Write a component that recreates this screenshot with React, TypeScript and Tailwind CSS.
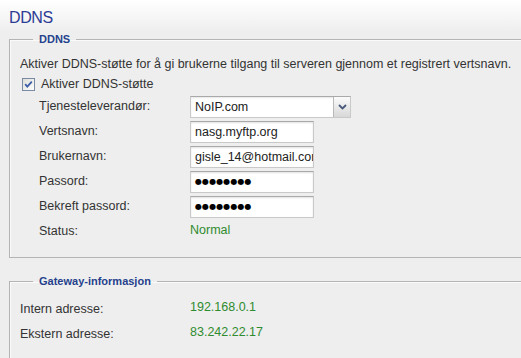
import React from "react";

const labelCls = "w-[151px] shrink-0";
const boxCls =
  "h-[22px] w-[124px] border border-[#c9c9c9] border-t-[#a9a9a9] bg-white shadow-[inset_0_1px_2px_rgba(0,0,0,0.12)] pl-[4px] leading-[20px] overflow-hidden whitespace-nowrap text-[#222]";
const dotsCls =
  "h-[22px] w-[124px] border border-[#c9c9c9] border-t-[#a9a9a9] bg-white shadow-[inset_0_1px_2px_rgba(0,0,0,0.12)] pl-[4px] leading-[20px] overflow-hidden whitespace-nowrap text-[8px] tracking-[0.1px] text-black font-['DejaVu_Sans']";

const Row = ({ label, children }: { label: string; children: React.ReactNode }) => (
  <div className="flex h-[25px] items-center">
    <div className={labelCls}>{label}</div>
    {children}
  </div>
);

const Check = () => (
  <svg width="13" height="13" viewBox="0 0 13 13" className="shrink-0">
    <defs>
      <linearGradient id="cb" x1="0" y1="0" x2="1" y2="1">
        <stop offset="0" stopColor="#dcdcd6" />
        <stop offset="1" stopColor="#ffffff" />
      </linearGradient>
    </defs>
    <rect x="0.5" y="0.5" width="12" height="12" fill="url(#cb)" stroke="#7a8aa6" />
    <path d="M3.2 6.2 L5.3 8.6 L9.8 3.6" fill="none" stroke="#3c5da8" strokeWidth="1.8" />
  </svg>
);

const Chevron = () => (
  <svg width="9" height="6" viewBox="0 0 9 6">
    <path d="M1 1 L4.5 4.5 L8 1" fill="none" stroke="#4a5a7c" strokeWidth="1.8" />
  </svg>
);

export default function App() {
  return (
    <div
      className="relative h-[358px] w-[521px] overflow-hidden bg-[#eeeeee] text-[12.5px] text-[#333]"
      style={{ fontFamily: '"Liberation Sans", Arial, sans-serif' }}
    >
      <div className="h-[32px] bg-gradient-to-b from-white to-[#eeeeee] pl-[9px] pt-[8px]">
        <h1 className="text-[16px] leading-[20px] tracking-[-0.4px] text-[#2c3c94]">DDNS</h1>
      </div>

      <fieldset className="ml-[9px] border border-r-0 border-[#b4b4b4] pb-[13px] pl-[10px] shadow-[inset_1px_1px_0_#fafafa]">
        <legend className="ml-[13px] px-[6px] text-[11px] font-bold leading-[14px] text-[#25418c]">
          DDNS
        </legend>
        <div className="mt-[9px] h-[18px] leading-[18px] whitespace-nowrap">
          Aktiver DDNS-støtte for å gi brukerne tilgang til serveren gjennom et registrert vertsnavn.
        </div>
        <label className="mt-[2px] flex h-[18px] items-center gap-[6px] pl-[2px]">
          <Check />
          <span>Aktiver DDNS-støtte</span>
        </label>
        <div className="mt-[1px] pl-[19px]">
          <Row label="Tjenesteleverandør:">
            <div className="flex h-[22px] w-[161px] border border-[#c9c9c9] border-t-[#a9a9a9] bg-white shadow-[inset_0_1px_2px_rgba(0,0,0,0.1)]">
              <div className="flex-1 pl-[4px] leading-[20px] text-[#222]">NoIP.com</div>
              <div className="flex w-[17px] items-center justify-center border-l border-[#b9b9b9] bg-gradient-to-b from-[#fbfbfb] to-[#d8d8d8]">
                <Chevron />
              </div>
            </div>
          </Row>
          <Row label="Vertsnavn:">
            <div className={boxCls}>nasg.myftp.org</div>
          </Row>
          <Row label="Brukernavn:">
            <div className={boxCls}>gisle_14@hotmail.com</div>
          </Row>
          <Row label="Passord:">
            <div className={dotsCls}>●●●●●●●●</div>
          </Row>
          <Row label="Bekreft passord:">
            <div className={dotsCls}>●●●●●●●●</div>
          </Row>
          <Row label="Status:">
            <div className="-mt-[3px] text-[#2e8b2e]">Normal</div>
          </Row>
        </div>
      </fieldset>

      <fieldset className="ml-[9px] mt-[16px] h-[120px] border border-r-0 border-[#b4b4b4] pl-[10px] shadow-[inset_1px_1px_0_#fafafa]">
        <legend className="ml-[13px] px-[6px] text-[11px] font-bold leading-[14px] text-[#25418c]">
          Gateway-informasjon
        </legend>
        <div className="mt-[9px]">
          <div className="flex h-[25px] items-center">
            <div className="w-[170px] shrink-0">Intern adresse:</div>
            <div className="-mt-[4px] text-[#2e8b2e]">192.168.0.1</div>
          </div>
          <div className="flex h-[25px] items-center">
            <div className="w-[170px] shrink-0">Ekstern adresse:</div>
            <div className="-mt-[4px] text-[#2e8b2e]">83.242.22.17</div>
          </div>
        </div>
      </fieldset>
    </div>
  );
}
